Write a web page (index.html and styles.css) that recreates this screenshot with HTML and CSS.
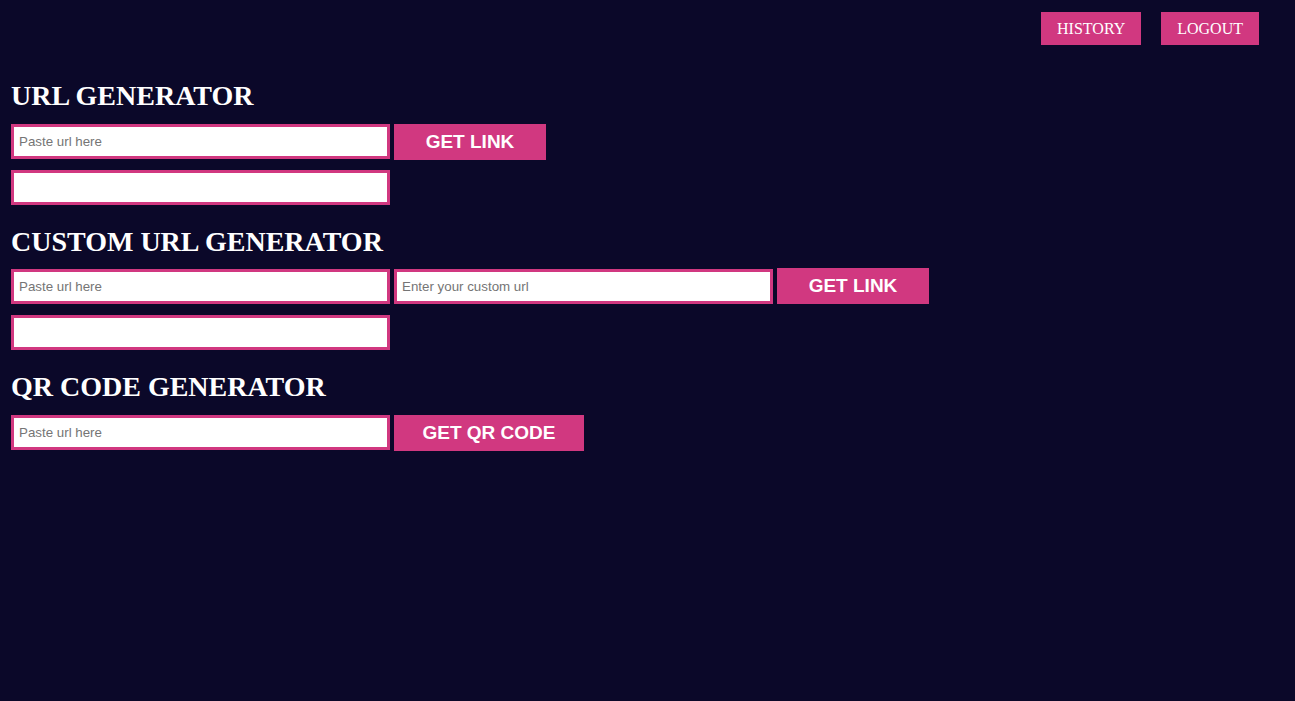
FILE: index.html
```html
<!DOCTYPE html>
<html>
<head>
<meta charset="utf-8">
<title>URL Generator</title>
<link rel="stylesheet" href="styles.css">
</head>
<body>
<header class="topbar">
  <button class="nav-btn">HISTORY</button>
  <button class="nav-btn">LOGOUT</button>
</header>
<main class="content">
  <section class="section">
    <h1 class="title">URL GENERATOR</h1>
    <div class="row">
      <input class="field" type="text" placeholder="Paste url here">
      <button class="action btn-link">GET LINK</button>
    </div>
    <div class="row">
      <input class="field" type="text">
    </div>
  </section>
  <section class="section">
    <h1 class="title">CUSTOM URL GENERATOR</h1>
    <div class="row row-raised">
      <input class="field shift" type="text" placeholder="Paste url here">
      <input class="field shift" type="text" placeholder="Enter your custom url">
      <button class="action btn-link">GET LINK</button>
    </div>
    <div class="row row-lowered">
      <input class="field" type="text">
    </div>
  </section>
  <section class="section">
    <h1 class="title">QR CODE GENERATOR</h1>
    <div class="row">
      <input class="field" type="text" placeholder="Paste url here">
      <button class="action btn-qr">GET QR CODE</button>
    </div>
  </section>
</main>
</body>
</html>
```

FILE: styles.css
```css
html, body {
  margin: 0;
  padding: 0;
  background: #0b0829;
}
body {
  font-family: "Liberation Serif", "Times New Roman", serif;
  color: #ffffff;
  height: 701px;
}
.topbar {
  display: flex;
  justify-content: flex-end;
  gap: 20px;
  padding: 12px 36px 0 0;
}
.nav-btn {
  font-family: "Liberation Serif", "Times New Roman", serif;
  font-size: 16px;
  line-height: 19px;
  color: #ffffff;
  background: #d13880;
  border: none;
  padding: 7px 16px;
  margin: 0;
}
.content {
  padding: 34px 0 0 11px;
  display: flex;
  flex-direction: column;
  gap: 20px;
}
.section {
  display: flex;
  flex-direction: column;
  gap: 10px;
}
.title {
  font-size: 28px;
  line-height: 33px;
  font-weight: bold;
  margin: 0 0 2px 0;
  color: #ffffff;
}
.row {
  display: flex;
  align-items: flex-start;
  gap: 4px;
}
.row-raised {
  margin-top: -2px;
}
.row-lowered {
  margin-top: 1px;
}
.field {
  box-sizing: border-box;
  width: 379px;
  height: 35px;
  border: 3px solid #d13880;
  background: #ffffff;
  padding: 0 5px;
  margin: 0;
  font-family: "Liberation Sans", Arial, sans-serif;
  font-size: 13.33px;
  color: #000000;
  outline: none;
}
.field::placeholder {
  color: #757575;
}
.shift {
  margin-top: 1px;
}
.action {
  box-sizing: border-box;
  height: 36px;
  border: none;
  margin: 0;
  padding: 0;
  background: #d13880;
  color: #ffffff;
  font-family: "Liberation Sans", Arial, sans-serif;
  font-weight: bold;
  font-size: 19px;
}
.btn-link {
  width: 152px;
}
.btn-qr {
  width: 190px;
}
```
